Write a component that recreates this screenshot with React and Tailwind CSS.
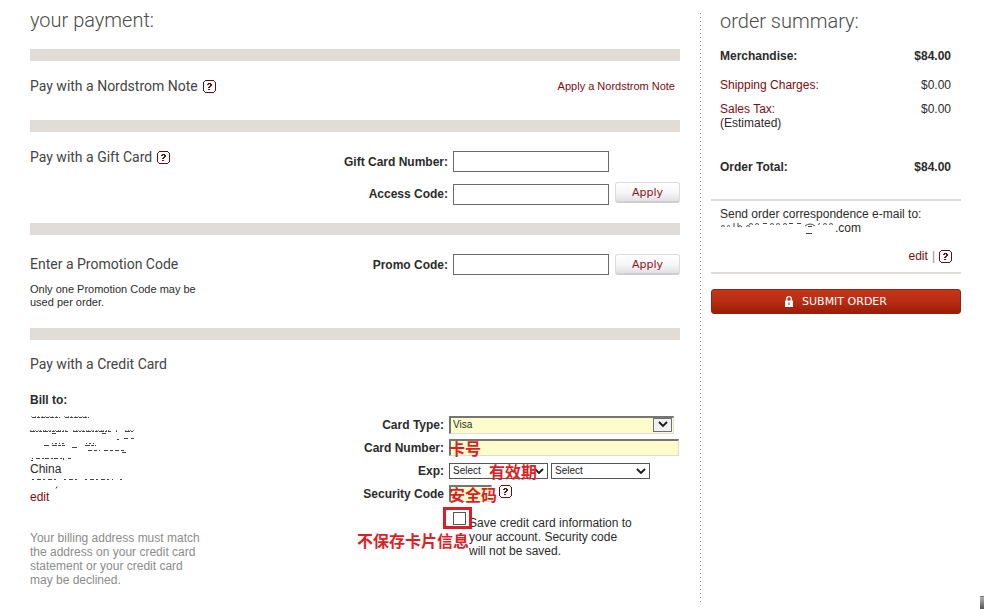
import React from "react";

const inputBox = "border border-[#6a6a6a] bg-white text-[12px] px-1 outline-none";
const sunken =
  "bg-[#fdfdcb] border-t-2 border-l-2 border-t-[#757575] border-l-[#757575] border-b border-r border-b-[#dcdcdc] border-r-[#dcdcdc] outline-none";
const note =
  "pointer-events-none absolute whitespace-nowrap text-[16px] leading-5 font-bold text-[#dc1f26] font-['Noto_Sans_CJK_SC',sans-serif]";
const heading =
  "font-[Roboto,sans-serif] text-[20px] leading-6 font-light text-[#4c4c4c]";
const title = "font-[Roboto,sans-serif] text-[14px] leading-5 font-normal text-[#444]";
const link = "text-[#7a0c12] hover:underline";

function Help() {
  return (
    <button type="button" aria-label="Help" className="block shrink-0">
      <svg width="13" height="13" viewBox="0 0 13 13" fill="none" shapeRendering="crispEdges">
        <path
          d="M2 .5h9M2 12.5h9M.5 2v9M12.5 2v9M1 1.5h1M11 1.5h1M1 11.5h1M11 11.5h1"
          stroke="#5e1119"
        />
        <path
          d="M4 4.5h2M5 3.5h3M7 4.5h2M7 5.5h2M6 6.5h2M5 7.5h2M5 9.5h2"
          stroke="#5e1119"
        />
      </svg>
    </button>
  );
}

function Chevron() {
  return (
    <svg width="10" height="7" viewBox="0 0 10 7" fill="none">
      <path d="M1 1l4 4 4-4" stroke="#1a1a1a" strokeWidth="1.8" />
    </svg>
  );
}

function Apply({ className = "" }) {
  return (
    <button
      type="button"
      className={`h-[21px] w-[65px] rounded-[3px] border border-[#dcdcde] border-b-2 border-b-[#cfcfd3] bg-gradient-to-b from-white via-[#f7f7f8] to-[#e2e2e6] font-['DejaVu_Sans',sans-serif] text-[11px] leading-[17px] text-[#8e1119] ${className}`}
    >
      Apply
    </button>
  );
}

function Section({ children }) {
  return (
    <section>
      <div className="h-3 bg-[#e1dcd8]" />
      <div className="flex justify-between">{children}</div>
    </section>
  );
}

function CardRow({ label, htmlFor, children }) {
  return (
    <div className="flex h-[23px] items-center justify-end gap-[5px]">
      <label htmlFor={htmlFor} className="font-bold whitespace-nowrap">
        {label}
      </label>
      <div className="relative flex w-[231px] items-center">{children}</div>
    </div>
  );
}

function MonthSelect({ id, label }) {
  return (
    <span className="relative flex w-[99px]">
      <select
        id={id}
        aria-label={label}
        className="h-4 w-full appearance-none border border-[#555] bg-white pl-[3px] text-[10px] leading-[14px] text-[#222]"
      >
        <option>Select</option>
      </select>
      <span className="pointer-events-none absolute top-[5px] right-1">
        <Chevron />
      </span>
    </span>
  );
}

function BillingRemnants() {
  return (
    <svg className="block" width="110" height="55" viewBox="0 0 110 55" fill="none" aria-hidden="true">
      <g stroke="#444">
        <path d="M1 9.5h28M34 9.5h24" strokeDasharray="1 3 1 2" opacity=".6" />
        <path d="M2 10.5h28M35 10.5h24" strokeDasharray="4 1 3 1" />
        <path d="M0 23.5h38M43 23.5h38M86 23.5h2M95 23.5h9" strokeDasharray="1 2 1 1" opacity=".7" />
        <path d="M0 24.5h38M43 24.5h38M86 24.5h1M95 24.5h9" strokeDasharray="5 1 2 1 3 1" />
        <path d="M22 26.5h4M72 26.5h4" />
        <path d="M94 31.5h10" strokeDasharray="4 3" />
        <path d="M87 32.5h2" />
        <path d="M22 36.5h12M56 36.5h9" strokeDasharray="1 2 2 2" />
        <path d="M14 38.5h6M22 38.5h13M55 38.5h11" strokeDasharray="5 1 3 1" />
        <path d="M42 40.5h5" />
        <path d="M58 43.5h12M74 43.5h20" strokeDasharray="4 2 3 2" />
        <path d="M92 45.5h4" />
        <path d="M2 51.5h1M6 51.5h28M38 51.5h3" strokeDasharray="4 2 2 1" />
        <path d="M1 53.5h2M33 52.5h1" />
      </g>
    </svg>
  );
}

function PhoneRemnants() {
  return (
    <svg className="block" width="110" height="14" viewBox="0 0 110 14" fill="none" aria-hidden="true">
      <path d="M2 3.5h24M34 3.5h14M55 3.5h28M90 3.5h2" stroke="#444" strokeDasharray="2 3 4 2" />
      <path d="M26 12.5l1-2" stroke="#444" />
    </svg>
  );
}

function EmailRemnants() {
  return (
    <svg className="block" width="115" height="14" viewBox="0 0 115 14" fill="none" aria-hidden="true">
      <g stroke="#444">
        <path d="M1 5.5q2-2 4 0M7 5.5q2-2 3 0M14 2v4M18 2v4q2-3 4 0M26 5.5q2-2 4 0" />
        <path d="M29 3.5q2-2 4 0M35 3.5q2-2 4 0M43 2.5h4M50 3.5q2-2 4 0M56 3.5q2-2 4 0M63 3.5q2-2 4 0M69 2.5h4M77 2.5h4" />
        <path d="M85 5q5-4 10 0M88 5.5h4M86 12.5h6M98 3.5l2-1M103 3.5q2-2 4 0M109 3.5q2-2 4 0" />
      </g>
    </svg>
  );
}

function Lock() {
  return (
    <svg width="8" height="11" viewBox="0 0 8 11" fill="none" aria-hidden="true">
      <path d="M1.7 5V3a2.3 2.3 0 0 1 4.6 0v2" stroke="#fff" strokeWidth="1.3" />
      <path d="M0 4.5h8V11H0z" fill="#fff" />
      <path d="M3.5 6.5h1v2.5h-1z" fill="#a32410" />
    </svg>
  );
}

export default function App() {
  return (
    <div className="flex min-h-screen bg-white font-['Liberation_Sans',Arial,sans-serif] text-[12px] leading-[14px] text-[#2b2b2b]">
      <main className="flex-1 pt-2 pr-5 pl-[30px]">
        <h1 className={`${heading} mb-[17px]`}>your payment:</h1>

        <Section>
          <div className="flex items-center gap-[5px] pt-[15px] pb-6">
            <h2 className={title}>Pay with a Nordstrom Note</h2>
            <Help />
          </div>
          <a href="#note" className={`${link} pt-[18px] pr-[5px] text-[11px]`}>
            Apply a Nordstrom Note
          </a>
        </Section>

        <Section>
          <div className="flex items-center gap-[5px] self-start pt-[15px]">
            <h2 className={title}>Pay with a Gift Card</h2>
            <Help />
          </div>
          <form className="flex flex-col gap-[10px] pt-[19px] pb-[18px]">
            <div className="flex items-center justify-end gap-[5px]">
              <label htmlFor="gift" className="font-bold">Gift Card Number:</label>
              <div className="flex w-[227px]">
                <input id="gift" className={`${inputBox} h-[21px] w-[156px]`} />
              </div>
            </div>
            <div className="flex h-[23px] items-end justify-end gap-[5px]">
              <label htmlFor="access" className="pb-1 font-bold">Access Code:</label>
              <div className="flex w-[227px] items-end justify-between">
                <input id="access" className={`${inputBox} h-[21px] w-[156px]`} />
                <Apply className="mb-[2px]" />
              </div>
            </div>
          </form>
        </Section>

        <Section>
          <div className="w-[180px] pt-[19px] pb-[19px]">
            <h2 className={title}>Enter a Promotion Code</h2>
            <p className="mt-[9px] text-[11px] leading-[13px]">
              Only one Promotion Code may be used per order.
            </p>
          </div>
          <form className="pt-[19px]">
            <div className="flex items-center gap-[5px]">
              <label htmlFor="promo" className="font-bold">Promo Code:</label>
              <div className="flex w-[227px] justify-between">
                <input id="promo" className={`${inputBox} h-[21px] w-[156px]`} />
                <Apply />
              </div>
            </div>
          </form>
        </Section>

        <Section>
          <div className="w-[175px] pt-[14px]">
            <h2 className={title}>Pay with a Credit Card</h2>
            <h3 className="mt-[19px] font-bold">Bill to:</h3>
            <BillingRemnants />
            <p>China</p>
            <PhoneRemnants />
            <a href="#billing" className={link}>edit</a>
            <p className="mt-[27px] text-[#8c8c8c]">
              Your billing address must match the address on your credit card statement or your
              credit card may be declined.
            </p>
          </div>

          <form className="pt-[73px]">
            <CardRow label="Card Type:" htmlFor="type">
              <span className="relative flex w-[225px]">
                <select
                  id="type"
                  className={`${sunken} h-[18px] w-full appearance-none pl-[2px] text-[10px] leading-[14px]`}
                >
                  <option>Visa</option>
                </select>
                <span className="pointer-events-none absolute top-[2px] right-[2px] flex h-[14px] w-[19px] items-center justify-center border border-[#707070] bg-[#f0f0f0]">
                  <Chevron />
                </span>
              </span>
            </CardRow>
            <CardRow label="Card Number:" htmlFor="number">
              <input id="number" className={`${sunken} h-[17px] w-[230px]`} />
              <span className={`${note} left-0`}>卡号</span>
            </CardRow>
            <CardRow label="Exp:" htmlFor="month">
              <span className="flex gap-[3px]">
                <MonthSelect id="month" label="Expiration month" />
                <MonthSelect id="year" label="Expiration year" />
              </span>
              <span className={`${note} left-10`}>有效期</span>
            </CardRow>
            <CardRow label="Security Code" htmlFor="cvv">
              <input id="cvv" className={`${sunken} h-[17px] w-[43px]`} />
              <span className="mb-1 ml-[7px]">
                <Help />
              </span>
              <span className={`${note} left-0`}>安全码</span>
            </CardRow>
            <div className="flex justify-end">
              <div className="relative flex w-[227px] items-start gap-[3px] pt-[7px]">
                <input
                  id="save"
                  type="checkbox"
                  className="h-[13px] w-[13px] shrink-0 appearance-none border border-[#555] bg-white"
                />
                <label htmlFor="save" className="w-[165px] pt-1 leading-[14px]">
                  Save credit card information to your account. Security code will not be saved.
                </label>
                <span className="pointer-events-none absolute top-[2px] -left-[10px] h-[22px] w-[29px] border-3 border-[#d9202a]" />
                <span className={`${note} top-[25px] right-[211px]`}>不保存卡片信息</span>
              </div>
            </div>
          </form>
        </Section>
      </main>

      <div className="mt-3 mb-1 w-px bg-[repeating-linear-gradient(to_bottom,transparent_0_1px,#8a8a8a_1px_2px,transparent_2px_4px)]" />

      <aside className="mr-[23px] ml-[10px] w-[250px] pt-[9px]">
        <div className="pr-[10px] pl-[9px]">
          <h1 className={heading}>order summary:</h1>
          <table className="mt-4 w-full text-left align-top">
            <tbody>
              <tr className="font-bold">
                <th scope="row" className="pb-[15px]">Merchandise:</th>
                <td className="pb-[15px] text-right">$84.00</td>
              </tr>
              <tr>
                <th scope="row" className="pb-[10px] font-normal">
                  <a href="#shipping" className={link}>Shipping Charges:</a>
                </th>
                <td className="pb-[10px] text-right">$0.00</td>
              </tr>
              <tr className="align-top">
                <th scope="row" className="pb-[30px] font-normal">
                  <a href="#tax" className={link}>Sales Tax:</a>
                  <br />
                  (Estimated)
                </th>
                <td className="pb-[30px] text-right">$0.00</td>
              </tr>
              <tr className="font-bold">
                <th scope="row">Order Total:</th>
                <td className="text-right">$84.00</td>
              </tr>
            </tbody>
          </table>
        </div>
        <div className="mt-[25px] border-y-2 border-[#dfdbd8] pt-[6px] pr-[9px] pb-[9px] pl-[9px]">
          <p className="whitespace-nowrap">Send order correspondence e-mail to:</p>
          <div className="flex">
            <EmailRemnants />
            <span>.com</span>
          </div>
          <div className="mt-[14px] flex items-center justify-end gap-1">
            <a href="#email" className={link}>edit</a>
            <span className="text-[#8c8c8c]">|</span>
            <Help />
          </div>
        </div>
        <button
          type="submit"
          className="mt-[15px] flex h-[25px] w-full items-center justify-center gap-[9px] rounded-[3px] border border-[#8f2412] bg-gradient-to-b from-[#c4361a] via-[#b82d14] to-[#9c1c02] font-['DejaVu_Sans',sans-serif] text-[11px] text-white"
        >
          <Lock />
          SUBMIT ORDER
        </button>
      </aside>

      <div className="fixed right-0 bottom-0 h-[13px] w-1 border-t border-[#777] bg-gradient-to-b from-[#b5b5b5] to-[#555]" />
    </div>
  );
}
